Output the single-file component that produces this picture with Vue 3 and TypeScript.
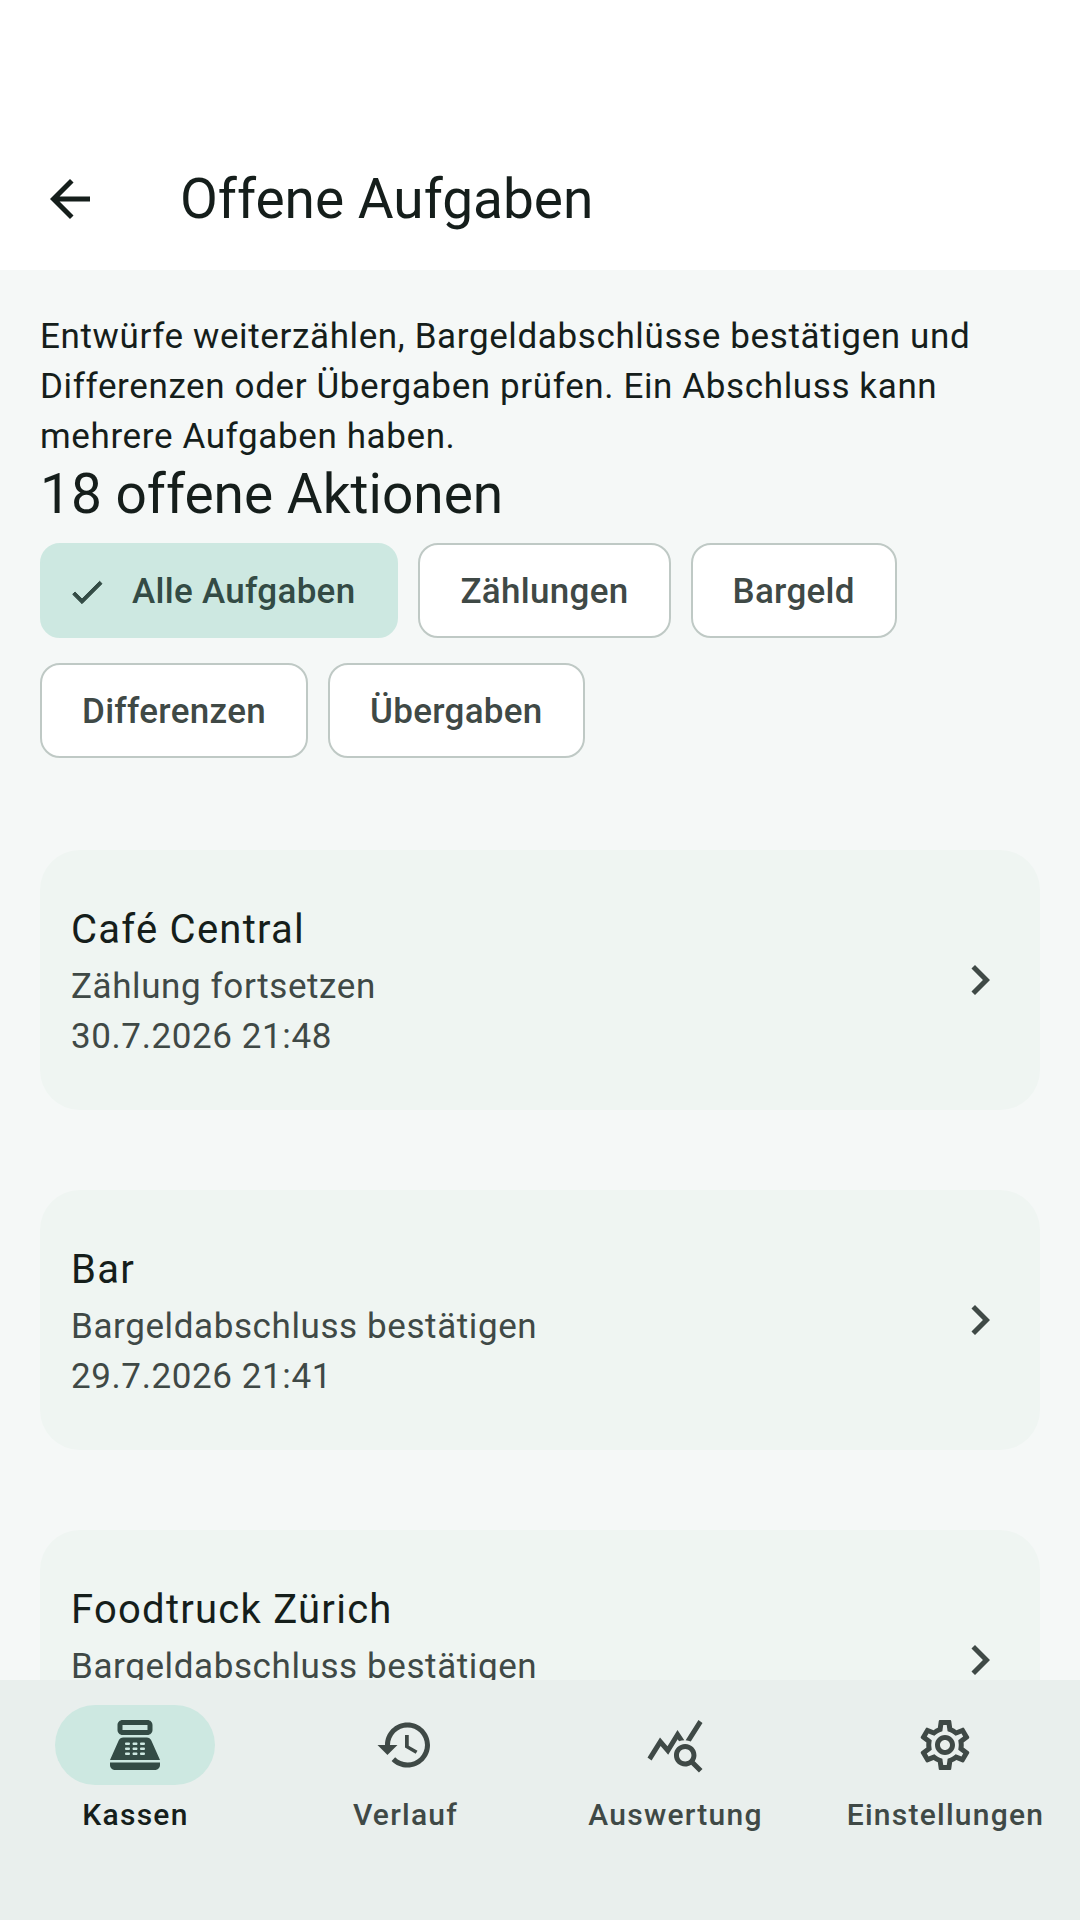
<script setup lang="ts">
import { ref } from 'vue';

interface Task {
  name: string;
  action: string;
  date: string;
}

const filters = ['Alle Aufgaben', 'Zählungen', 'Bargeld', 'Differenzen', 'Übergaben'];
const activeFilter = ref('Alle Aufgaben');

const tasks: Task[] = [
  { name: 'Café Central', action: 'Zählung fortsetzen', date: '30.7.2026 21:48' },
  { name: 'Bar', action: 'Bargeldabschluss bestätigen', date: '29.7.2026 21:41' },
  { name: 'Foodtruck Zürich', action: 'Bargeldabschluss bestätigen', date: '29.7.2026 21:41' },
];

const navItems = [
  {
    label: 'Kassen',
    icon: 'M17 2H7c-1.1 0-2 .9-2 2v2c0 1.1.9 2 2 2h10c1.1 0 2-.9 2-2V4c0-1.1-.9-2-2-2zm0 4H7V4h10v2zm3 16H4c-1.1 0-2-.9-2-2v-1h20v1c0 1.1-.9 2-2 2zm-1.47-11.81C18.21 9.47 17.49 9 16.7 9H7.3c-.79 0-1.51.47-1.83 1.19L2 18h20l-3.47-7.81zM9.5 16h-1c-.28 0-.5-.22-.5-.5s.22-.5.5-.5h1c.28 0 .5.22.5.5s-.22.5-.5.5zm0-2h-1c-.28 0-.5-.22-.5-.5s.22-.5.5-.5h1c.28 0 .5.22.5.5s-.22.5-.5.5zm0-2h-1c-.28 0-.5-.22-.5-.5s.22-.5.5-.5h1c.28 0 .5.22.5.5s-.22.5-.5.5zm3 4h-1c-.28 0-.5-.22-.5-.5s.22-.5.5-.5h1c.28 0 .5.22.5.5s-.22.5-.5.5zm0-2h-1c-.28 0-.5-.22-.5-.5s.22-.5.5-.5h1c.28 0 .5.22.5.5s-.22.5-.5.5zm0-2h-1c-.28 0-.5-.22-.5-.5s.22-.5.5-.5h1c.28 0 .5.22.5.5s-.22.5-.5.5zm3 4h-1c-.28 0-.5-.22-.5-.5s.22-.5.5-.5h1c.28 0 .5.22.5.5s-.22.5-.5.5zm0-2h-1c-.28 0-.5-.22-.5-.5s.22-.5.5-.5h1c.28 0 .5.22.5.5s-.22.5-.5.5zm0-2h-1c-.28 0-.5-.22-.5-.5s.22-.5.5-.5h1c.28 0 .5.22.5.5s-.22.5-.5.5z',
  },
  {
    label: 'Verlauf',
    icon: 'M13 3c-4.97 0-9 4.03-9 9H1l3.89 3.89.07.14L9 12H6c0-3.87 3.13-7 7-7s7 3.13 7 7-3.13 7-7 7c-1.93 0-3.68-.79-4.94-2.06l-1.42 1.42C8.27 19.99 10.51 21 13 21c4.97 0 9-4.03 9-9s-4.03-9-9-9zm-1 5v5l4.28 2.54.72-1.21-3.5-2.08V8H12z',
  },
  {
    label: 'Auswertung',
    icon: 'M19.88 18.47c.44-.7.7-1.51.7-2.39 0-2.49-2.01-4.5-4.5-4.5s-4.5 2.01-4.5 4.5 2.01 4.5 4.49 4.5c.88 0 1.7-.26 2.39-.7L21.58 23 23 21.58l-3.12-3.11zm-3.8.11c-1.38 0-2.5-1.12-2.5-2.5s1.12-2.5 2.5-2.5 2.5 1.12 2.5 2.5-1.12 2.5-2.5 2.5zm-.36-8.5c-.74.02-1.45.18-2.1.45l-.55-.83-3.8 6.18-3.01-3.52-3.63 5.81L1 17l5-8 3 3.5L13 6l2.72 4.08zm2.59.5c-.64-.28-1.33-.45-2.05-.49L21.38 2 23 3.18l-4.69 7.4z',
  },
  {
    label: 'Einstellungen',
    icon: 'M19.43 12.98c.04-.32.07-.64.07-.98 0-.34-.03-.66-.07-.98l2.11-1.65c.19-.15.24-.42.12-.64l-2-3.46c-.09-.16-.26-.25-.44-.25-.06 0-.12.01-.17.03l-2.49 1c-.52-.4-1.08-.73-1.69-.98l-.38-2.65C14.46 2.18 14.25 2 14 2h-4c-.25 0-.46.18-.49.42l-.38 2.65c-.61.25-1.17.59-1.69.98l-2.49-1c-.06-.02-.12-.03-.18-.03-.17 0-.34.09-.43.25l-2 3.46c-.13.22-.07.49.12.64l2.11 1.65c-.04.32-.07.65-.07.98 0 .33.03.66.07.98l-2.11 1.65c-.19.15-.24.42-.12.64l2 3.46c.09.16.26.25.44.25.06 0 .12-.01.17-.03l2.49-1c.52.4 1.08.73 1.69.98l.38 2.65c.03.24.24.42.49.42h4c.25 0 .46-.18.49-.42l.38-2.65c.61-.25 1.17-.59 1.69-.98l2.49 1c.06.02.12.03.18.03.17 0 .34-.09.43-.25l2-3.46c.12-.22.07-.49-.12-.64l-2.11-1.65zm-1.98-1.71c.04.31.05.52.05.73 0 .21-.02.43-.05.73l-.14 1.13.89.7 1.08.84-.7 1.21-1.27-.51-1.04-.42-.9.68c-.43.32-.84.56-1.25.73l-1.06.43-.16 1.13-.2 1.35h-1.4l-.19-1.35-.16-1.13-1.06-.43c-.43-.18-.83-.41-1.23-.71l-.91-.7-1.06.43-1.27.51-.7-1.21 1.08-.84.89-.7-.14-1.13c-.03-.31-.05-.54-.05-.74s.02-.43.05-.73l.14-1.13-.89-.7-1.08-.84.7-1.21 1.27.51 1.04.42.9-.68c.43-.32.84-.56 1.25-.73l1.06-.43.16-1.13.2-1.35h1.39l.19 1.35.16 1.13 1.06.43c.43.18.83.41 1.23.71l.91.7 1.06-.43 1.27-.51.7 1.21-1.07.85-.89.7.14 1.13zM12 8c-2.21 0-4 1.79-4 4s1.79 4 4 4 4-1.79 4-4-1.79-4-4-4zm0 6c-1.1 0-2-.9-2-2s.9-2 2-2 2 .9 2 2-.9 2-2 2z',
  },
];
const activeNav = ref('Kassen');
</script>

<template>
  <div class="screen">
    <header class="app-bar">
      <button class="back" type="button" aria-label="Zurück">
        <svg viewBox="0 0 24 24" width="60" height="60"><path d="M20 11H7.83l5.59-5.59L12 4l-8 8 8 8 1.41-1.41L7.83 13H20v-2z" /></svg>
      </button>
      <h1>Offene Aufgaben</h1>
    </header>

    <main class="content">
      <p class="intro">Entwürfe weiterzählen, Bargeldabschlüsse bestätigen und Differenzen oder Übergaben prüfen. Ein Abschluss kann mehrere Aufgaben haben.</p>
      <h2>18 offene Aktionen</h2>

      <div class="chips">
        <button
          v-for="filter in filters"
          :key="filter"
          type="button"
          class="chip"
          :class="{ selected: filter === activeFilter }"
          @click="activeFilter = filter"
        >
          <svg v-if="filter === activeFilter" viewBox="0 0 24 24" width="40" height="40"><path d="M9 16.17 4.83 12l-1.42 1.41L9 19 21 7l-1.41-1.41z" /></svg>
          {{ filter }}
        </button>
      </div>

      <ul class="tasks">
        <li v-for="task in tasks" :key="task.name" class="task">
          <div class="task-text">
            <div class="task-name">{{ task.name }}</div>
            <div class="task-line">{{ task.action }}</div>
            <div class="task-line">{{ task.date }}</div>
          </div>
          <svg class="chevron" viewBox="0 0 24 24" width="60" height="60"><path d="M10 6 8.59 7.41 13.17 12l-4.58 4.59L10 18l6-6z" /></svg>
        </li>
      </ul>
    </main>

    <nav class="nav">
      <button
        v-for="item in navItems"
        :key="item.label"
        type="button"
        class="nav-item"
        :class="{ active: item.label === activeNav }"
        @click="activeNav = item.label"
      >
        <span class="indicator">
          <svg viewBox="0 0 24 24" width="60" height="60"><path :d="item.icon" fill-rule="evenodd" /></svg>
        </span>
        <span class="nav-label">{{ item.label }}</span>
      </button>
    </nav>
  </div>
</template>

<style>
html,
body {
  margin: 0;
  background: #f5f8f7;
}
</style>

<style scoped>
.screen {
  width: 1080px;
  height: 1920px;
  display: flex;
  flex-direction: column;
  overflow: hidden;
  background: #f5f8f7;
  color: #151e1b;
  font-family: Roboto, "Noto Sans", sans-serif;
}

button {
  font-family: inherit;
  border: none;
  background: none;
  padding: 0;
  cursor: pointer;
}

.app-bar {
  flex: none;
  height: 143px;
  padding-top: 127px;
  background: #fff;
  display: flex;
  align-items: center;
}

.back {
  width: 60px;
  height: 60px;
  margin-left: 40px;
  margin-right: 80px;
}

.back svg {
  display: block;
  fill: #151e1b;
}

h1 {
  margin: 0;
  font-size: 55px;
  line-height: 70px;
  font-weight: 400;
}

.content {
  flex: 1;
  min-height: 0;
  overflow: hidden;
  padding: 42px 40px 0;
}

.intro {
  margin: 0;
  font-size: 35px;
  line-height: 50px;
  letter-spacing: 0.625px;
}

h2 {
  margin: 0;
  font-size: 55px;
  line-height: 64px;
  font-weight: 400;
}

.chips {
  display: flex;
  flex-wrap: wrap;
  gap: 25px 20px;
  margin-top: 17px;
}

.chip {
  height: 95px;
  box-sizing: border-box;
  padding: 2px 40px 0;
  display: flex;
  align-items: center;
  border: 2.5px solid #bfc9c5;
  border-radius: 20px;
  background: #fff;
  color: #3f4946;
  font-size: 35px;
  font-weight: 500;
  letter-spacing: 0.3px;
}

.chip.selected {
  border-color: #cde8e1;
  background: #cde8e1;
  color: #334b45;
  padding: 2px 41px 0 25px;
  gap: 25px;
}

.chip svg {
  fill: #334b45;
  stroke: #334b45;
  stroke-width: 0.6;
}

.tasks {
  list-style: none;
  margin: 92px 0 0;
  padding: 0;
  display: flex;
  flex-direction: column;
  gap: 80px;
}

.task {
  height: 260px;
  flex: none;
  box-sizing: border-box;
  padding: 0 30px 0 31px;
  display: flex;
  align-items: center;
  justify-content: space-between;
  border-radius: 40px;
  background: #eff5f2;
}

.task-text {
  padding-top: 2px;
}

.task-name {
  font-size: 40px;
  line-height: 60px;
  letter-spacing: 1.25px;
}

.task-line {
  font-size: 35px;
  line-height: 50px;
  letter-spacing: 0.6px;
  color: #3f4946;
}

.task-name + .task-line {
  margin-top: 2px;
}

.chevron {
  fill: #3f4946;
}

.nav {
  flex: none;
  height: 240px;
  background: #e9efed;
  display: grid;
  grid-template-columns: repeat(4, 1fr);
}

.nav-item {
  display: flex;
  flex-direction: column;
  align-items: center;
  padding-top: 25px;
  color: #3f4946;
}

.indicator {
  width: 160px;
  height: 80px;
  display: flex;
  align-items: center;
  justify-content: center;
  border-radius: 40px;
}

.indicator svg {
  fill: #3f4946;
}

.nav-item.active .indicator {
  background: #cde8e1;
}

.nav-item.active .indicator svg {
  fill: #334b45;
}

.nav-item.active {
  color: #151e1b;
}

.nav-label {
  margin: 10px 0 0 1px;
  font-size: 30px;
  line-height: 40px;
  font-weight: 500;
  letter-spacing: 1.25px;
}
</style>
